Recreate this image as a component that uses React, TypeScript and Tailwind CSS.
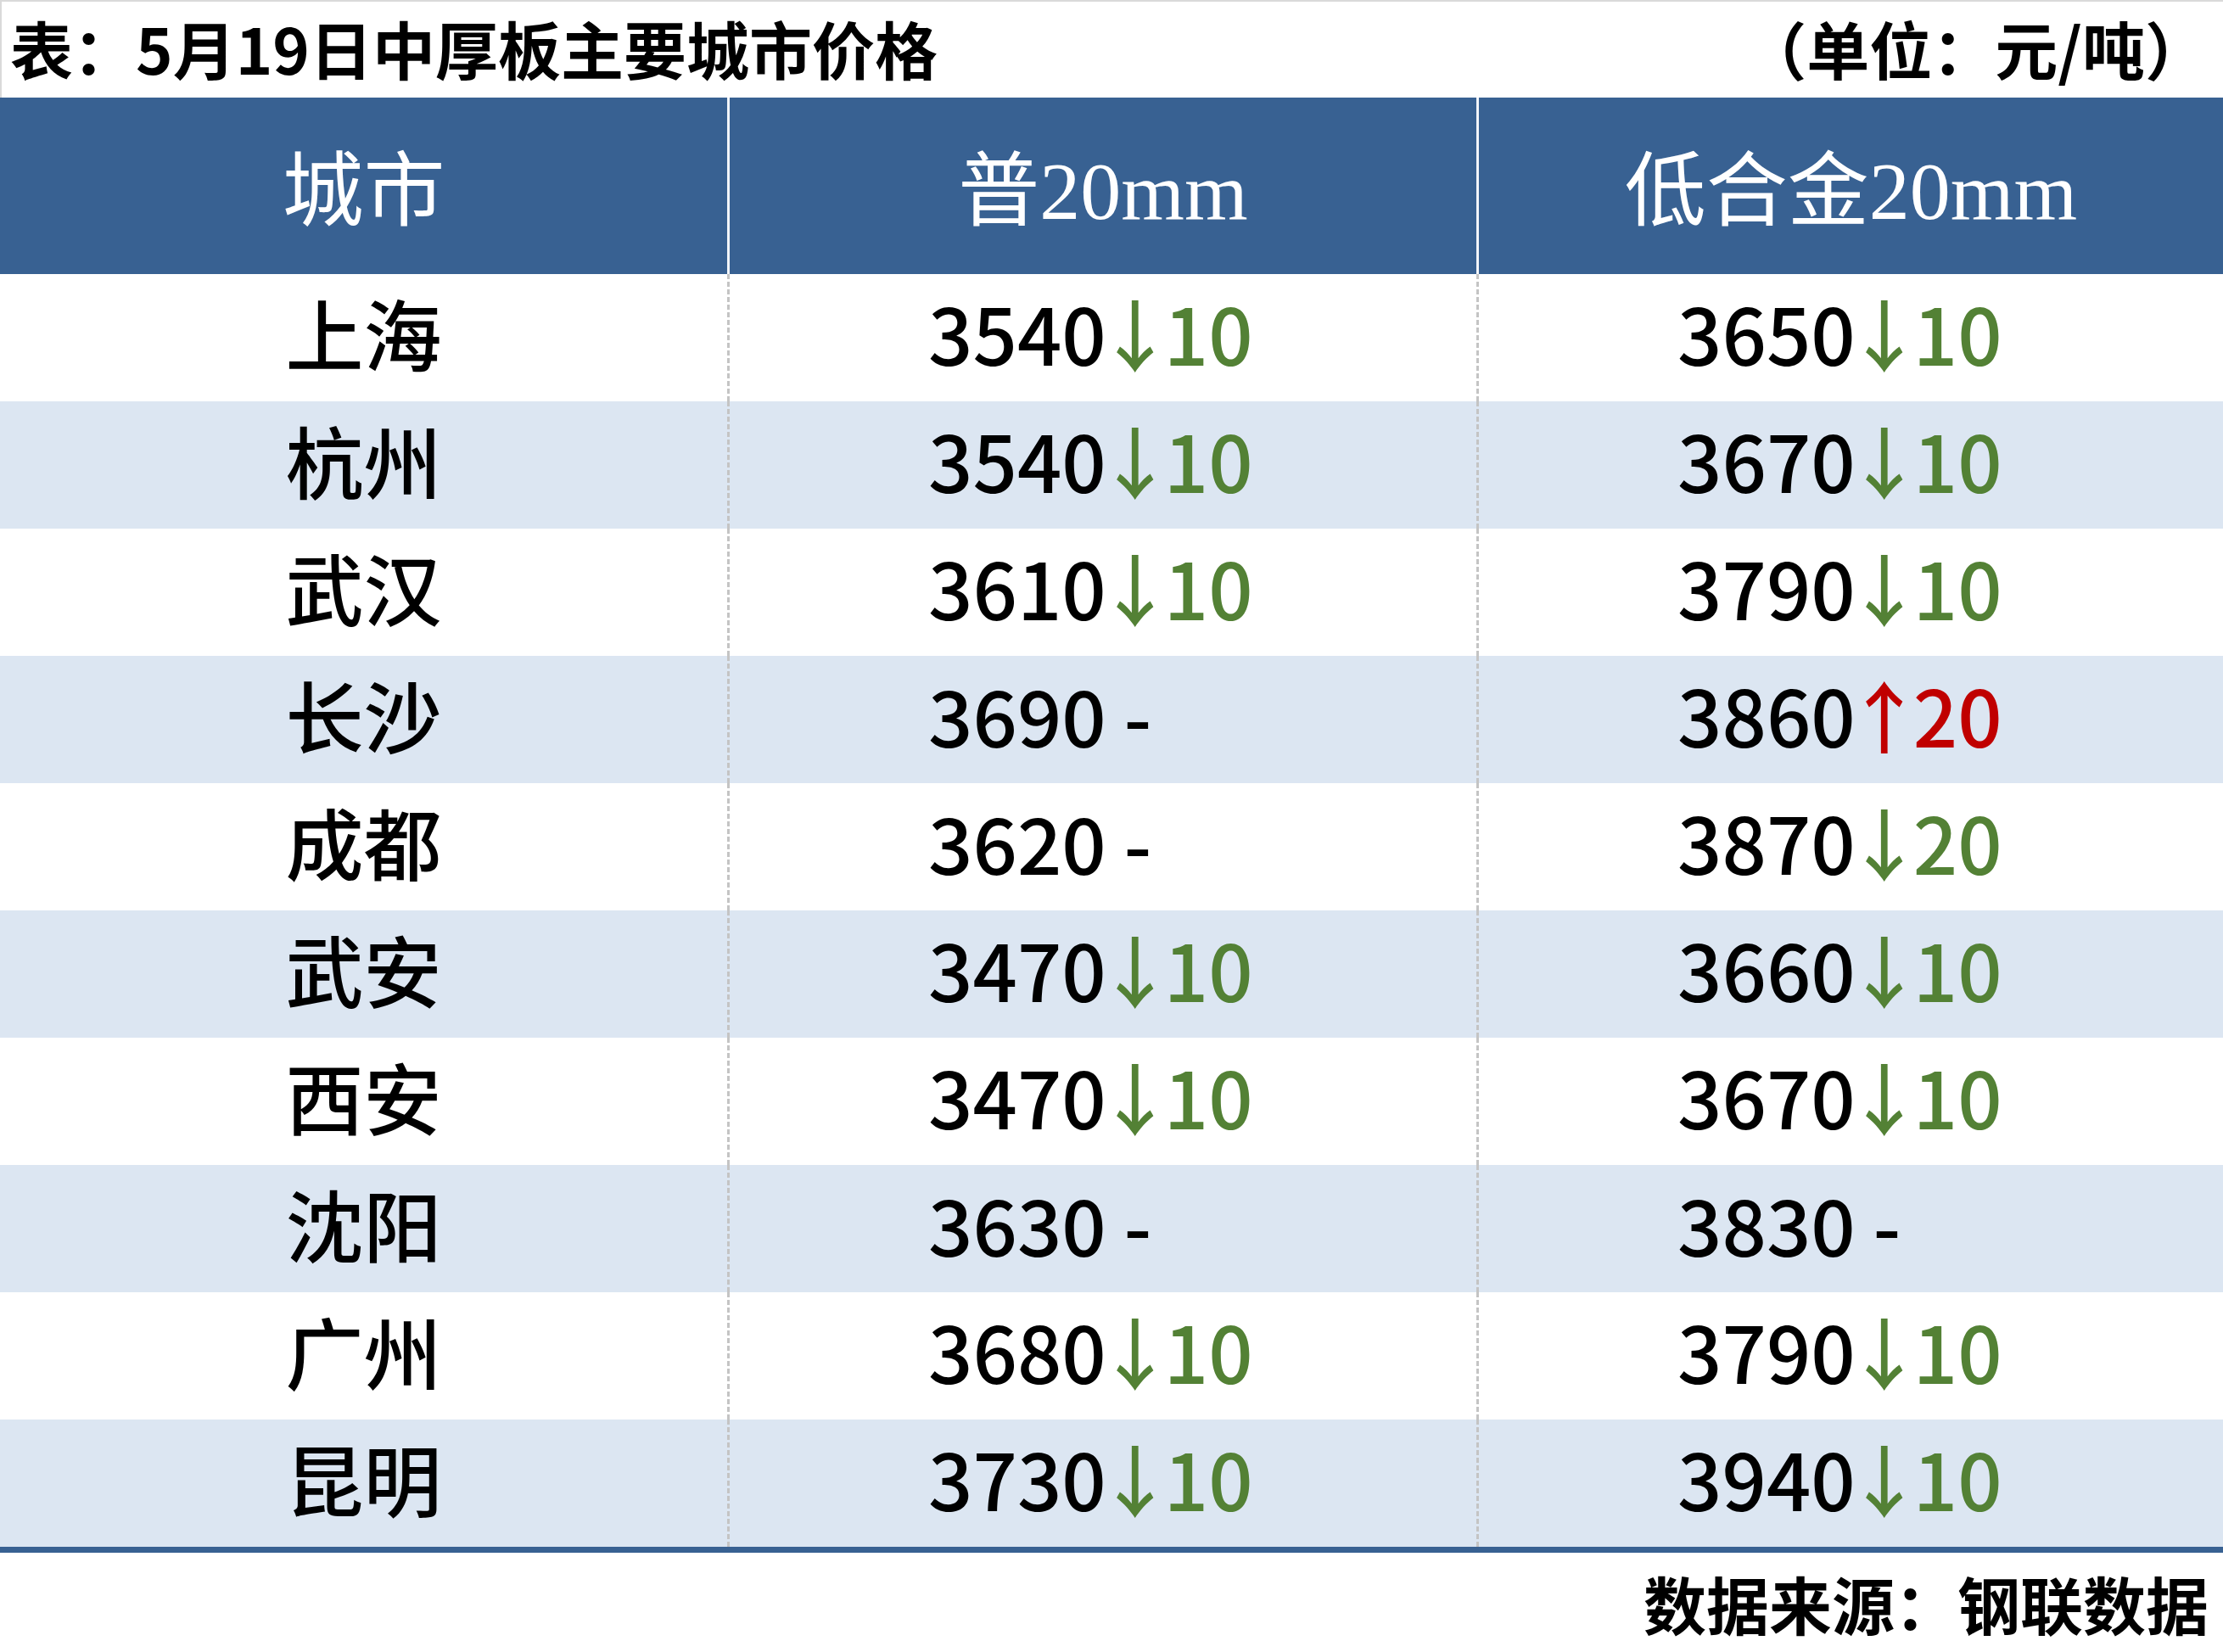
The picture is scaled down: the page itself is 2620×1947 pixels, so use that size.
import React from 'react';

type Change = { dir: 'up' | 'down' | 'none'; amount?: number };
type Row = { city: string; plain: number; plainChg: Change; alloy: number; alloyChg: Change };

const down10: Change = { dir: 'down', amount: 10 };
const flat: Change = { dir: 'none' };

const rows: Row[] = [
  { city: '上海', plain: 3540, plainChg: down10, alloy: 3650, alloyChg: down10 },
  { city: '杭州', plain: 3540, plainChg: down10, alloy: 3670, alloyChg: down10 },
  { city: '武汉', plain: 3610, plainChg: down10, alloy: 3790, alloyChg: down10 },
  { city: '长沙', plain: 3690, plainChg: flat, alloy: 3860, alloyChg: { dir: 'up', amount: 20 } },
  { city: '成都', plain: 3620, plainChg: flat, alloy: 3870, alloyChg: { dir: 'down', amount: 20 } },
  { city: '武安', plain: 3470, plainChg: down10, alloy: 3660, alloyChg: down10 },
  { city: '西安', plain: 3470, plainChg: down10, alloy: 3670, alloyChg: down10 },
  { city: '沈阳', plain: 3630, plainChg: flat, alloy: 3830, alloyChg: flat },
  { city: '广州', plain: 3680, plainChg: down10, alloy: 3790, alloyChg: down10 },
  { city: '昆明', plain: 3730, plainChg: down10, alloy: 3940, alloyChg: down10 },
];

const sans = "font-['Noto_Sans_CJK_SC','Noto_Sans',sans-serif]";

function Price({ value, change }: { value: number; change: Change }) {
  return (
    <span className="whitespace-pre">
      <span className="text-black">{value}</span>
      {change.dir === 'none' && <span className="text-black"> -</span>}
      {change.dir === 'down' && (
        <span className="text-[#538135]">
          <span className="ml-[-12px] mr-[-12px]">↓</span>
          {change.amount}
        </span>
      )}
      {change.dir === 'up' && (
        <span className="text-[#c00000]">
          <span className="ml-[-12px] mr-[-12px]">↑</span>
          {change.amount}
        </span>
      )}
    </span>
  );
}

export default function App() {
  return (
    <div className={`w-[2620px] h-[1947px] bg-white flex flex-col ${sans}`}>
      {/* Title */}
      <div className="h-[115px] flex items-center justify-between pl-[10px] pr-[18px] pb-[6px] border-t-2 border-l-2 border-[#d9d9d9] text-[74px] font-bold text-black leading-none">
        <span>表：5月19日中厚板主要城市价格</span>
        <span>（单位：元/吨）</span>
      </div>

      {/* Header */}
      <div className="h-[208px] grid grid-cols-[857px_883px_880px] bg-[#386192] text-white text-[96px] leading-none font-['Liberation_Serif','Noto_Sans_CJK_SC',serif]">
        <div className="flex items-center justify-center pt-[14px]">城市</div>
        <div className="flex items-center justify-center pt-[14px] border-l-[3px] border-[#f2f5f9]">普20mm</div>
        <div className="flex items-center justify-center pt-[14px] border-l-[3px] border-[#f2f5f9]">低合金20mm</div>
      </div>

      {/* Body */}
      {rows.map((r, i) => (
        <div
          key={r.city}
          className={`h-[150px] grid grid-cols-[857px_883px_880px] text-[92px] leading-none font-medium ${
            i % 2 === 1 ? 'bg-[#dce6f2]' : 'bg-white'
          }`}
        >
          <div className="flex items-center justify-center pb-[14px] text-black">{r.city}</div>
          <div className="flex items-center pl-[234px] pb-[14px] border-l-[3px] border-dashed border-[#c4c4c4]">
            <Price value={r.plain} change={r.plainChg} />
          </div>
          <div className="flex items-center pl-[234px] pb-[14px] border-l-[3px] border-dashed border-[#c4c4c4]">
            <Price value={r.alloy} change={r.alloyChg} />
          </div>
        </div>
      ))}

      <div className="h-[7px] bg-[#386192]" />

      {/* Footer */}
      <div className="flex-1 flex items-center justify-end pr-[17px] text-[74px] font-bold text-black leading-none">
        数据来源：钢联数据
      </div>
    </div>
  );
}
